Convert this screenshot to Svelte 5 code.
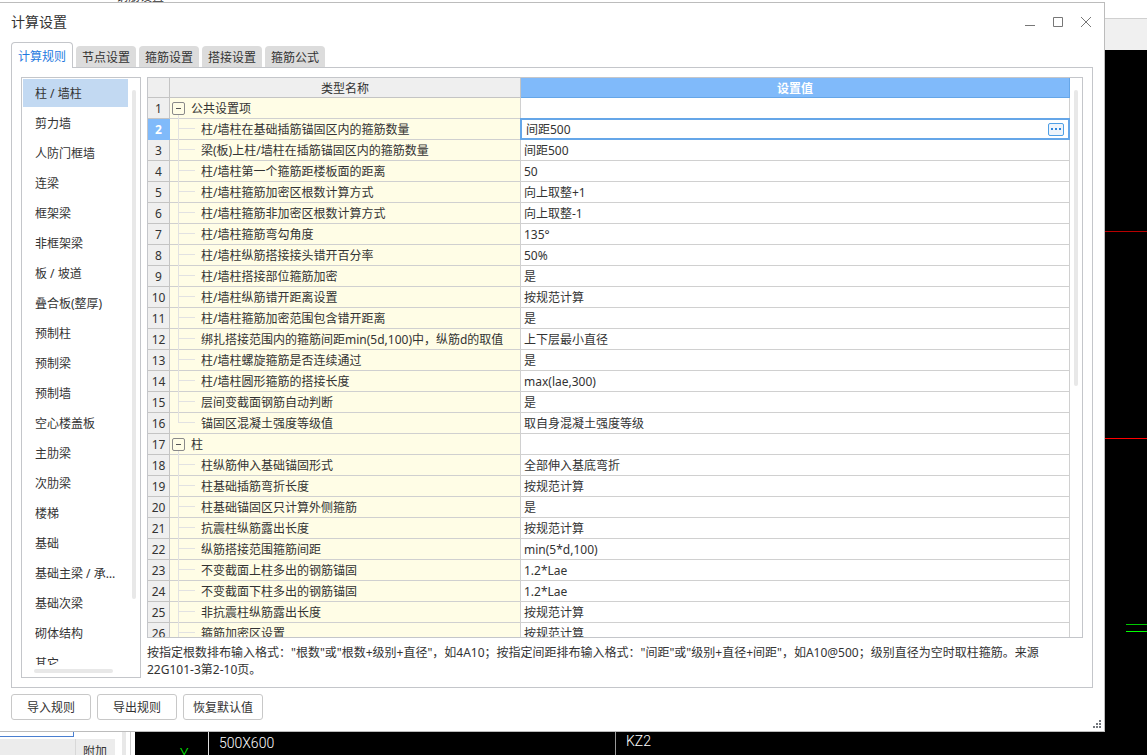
<script>
  const tabs = ['计算规则', '节点设置', '箍筋设置', '搭接设置', '箍筋公式'];
  const members = [
    '柱 / 墙柱', '剪力墙', '人防门框墙', '连梁', '框架梁', '非框架梁', '板 / 坡道',
    '叠合板(整厚)', '预制柱', '预制梁', '预制墙', '空心楼盖板', '主肋梁', '次肋梁',
    '楼梯', '基础', '基础主梁 / 承台梁', '基础次梁', '砌体结构', '其它'
  ];
  const source = [
    ['公共设置项', null],
    ['柱/墙柱在基础插筋锚固区内的箍筋数量', '间距500'],
    ['梁(板)上柱/墙柱在插筋锚固区内的箍筋数量', '间距500'],
    ['柱/墙柱第一个箍筋距楼板面的距离', '50'],
    ['柱/墙柱箍筋加密区根数计算方式', '向上取整+1'],
    ['柱/墙柱箍筋非加密区根数计算方式', '向上取整-1'],
    ['柱/墙柱箍筋弯勾角度', '135°'],
    ['柱/墙柱纵筋搭接接头错开百分率', '50%'],
    ['柱/墙柱搭接部位箍筋加密', '是'],
    ['柱/墙柱纵筋错开距离设置', '按规范计算'],
    ['柱/墙柱箍筋加密范围包含错开距离', '是'],
    ['绑扎搭接范围内的箍筋间距min(5d,100)中，纵筋d的取值', '上下层最小直径'],
    ['柱/墙柱螺旋箍筋是否连续通过', '是'],
    ['柱/墙柱圆形箍筋的搭接长度', 'max(lae,300)'],
    ['层间变截面钢筋自动判断', '是'],
    ['锚固区混凝土强度等级值', '取自身混凝土强度等级'],
    ['柱', null],
    ['柱纵筋伸入基础锚固形式', '全部伸入基底弯折'],
    ['柱基础插筋弯折长度', '按规范计算'],
    ['柱基础锚固区只计算外侧箍筋', '是'],
    ['抗震柱纵筋露出长度', '按规范计算'],
    ['纵筋搭接范围箍筋间距', 'min(5*d,100)'],
    ['不变截面上柱多出的钢筋锚固', '1.2*Lae'],
    ['不变截面下柱多出的钢筋锚固', '1.2*Lae'],
    ['非抗震柱纵筋露出长度', '按规范计算'],
    ['箍筋加密区设置', '按规范计算']
  ];

  let activeTab = $state(0);
  let activeMember = $state(0);
  let selected = $state(1);
  let rows = $state(
    source.map(([name, value], i) => ({
      name,
      value,
      group: value === null,
      last: i + 1 < source.length && source[i + 1][1] === null
    }))
  );
</script>

<div class="desktop">
  <div class="canvas" aria-hidden="true">
    <div class="app-top"><span class="app-title">钢筋设置</span></div>
    <div class="app-bar"></div>
    <div class="axis dim"></div>
    <div class="axis red"></div>
    <div class="axis green upper"></div>
    <div class="axis green lower"></div>
    <div class="dock">
      <div class="dock-field"></div>
      <div class="dock-head"><span>附加</span></div>
      <div class="dock-bar"></div>
      <div class="dock-edge"></div>
    </div>
    <span class="cad mark">Y</span>
    <div class="cad-line first"></div>
    <span class="cad size">500X600</span>
    <div class="cad-line second"></div>
    <span class="cad tag">KZ2</span>
  </div>

  <main class="dialog">
    <header>
      <h1>计算设置</h1>
      <div class="window-buttons">
        <button aria-label="最小化"><svg viewBox="0 0 12 12"><path d="M1 9.5h10" /></svg></button>
        <button aria-label="最大化"><svg viewBox="0 0 12 12"><path d="M1.500 1.500h9v9h-9z" /></svg></button>
        <button aria-label="关闭"><svg viewBox="0 0 12 12"><path d="M1 1l10 10M11 1L1 11" /></svg></button>
      </div>
    </header>

    <div class="tabs" role="tablist">
      {#each tabs as tab, i}
        <button role="tab" aria-selected={activeTab === i} class:active={activeTab === i} onclick={() => (activeTab = i)}>{tab}</button>
      {/each}
    </div>

    <section class="panel">
      <nav class="members">
        <ul>
          {#each members as member, i}
            <li><button class:active={activeMember === i} onclick={() => (activeMember = i)}><span>{member}</span></button></li>
          {/each}
        </ul>
        <div class="thumb side"></div>
        <div class="thumb bottom"></div>
      </nav>

      <div class="content">
        <div class="grid">
          <table>
            <colgroup><col class="c-num" /><col class="c-name" /><col /></colgroup>
            <thead>
              <tr><th></th><th>类型名称</th><th class="picked">设置值</th></tr>
            </thead>
            <tbody>
              {#each rows as row, i}
                <tr class:selected={selected === i} onclick={() => (selected = i)}>
                  <th scope="row">{i + 1}</th>
                  <td class="name" class:group={row.group} class:last={row.last}>
                    <div>
                      {#if row.group}
                        <button class="toggle" aria-label="折叠{row.name}"></button>
                      {:else}
                        <i class="branch"></i>
                      {/if}
                      <span>{row.name}</span>
                    </div>
                  </td>
                  <td class="value">
                    {#if selected === i && !row.group}
                      <div class="editor">
                        <input aria-label={row.name} bind:value={row.value} />
                        <button aria-label="更多"><i></i><i></i><i></i></button>
                      </div>
                    {:else}
                      {row.value ?? ''}
                    {/if}
                  </td>
                </tr>
              {/each}
            </tbody>
          </table>
          <div class="thumb side"></div>
        </div>
        <p>按指定根数排布输入格式："根数"或"根数+级别+直径"，如4A10；按指定间距排布输入格式："间距"或"级别+直径+间距"，如A10@500；级别直径为空时取柱箍筋。来源22G101-3第2-10页。</p>
      </div>
    </section>

    <footer>
      <button>导入规则</button>
      <button>导出规则</button>
      <button>恢复默认值</button>
      <svg class="grip" viewBox="0 0 8 8"><path d="M6 0h2v2H6zM3 3h2v2H3zM6 3h2v2H6zM0 6h2v2H0zM3 6h2v2H3zM6 6h2v2H6z" /></svg>
    </footer>
  </main>
</div>

<style>
  :global(body) { margin: 0; }
  .desktop, .desktop * { box-sizing: border-box; }
  .desktop {
    position: relative;
    height: 100vh;
    overflow: hidden;
    background: #000;
    color: #333;
    font: 12px/20px "Noto Sans", "Noto Sans CJK SC", sans-serif;
  }
  button, input { font: inherit; color: inherit; margin: 0; padding: 0; }

  /* drawing canvas behind the window */
  .canvas > * { position: absolute; }
  .app-top { top: 0; left: 0; right: 0; height: 19px; background: #fff; border-bottom: 1px solid #d0d0d0; }
  .app-title { position: absolute; left: 116px; top: -12px; line-height: 18px; }
  .app-bar { top: 19px; left: 0; right: 0; height: 31px; background: #f0f0f0; }
  .axis { right: 0; width: 43px; height: 1px; }
  .axis.dim { top: 231px; background: #b80000; }
  .axis.red { top: 438px; background: #f00; }
  .axis.green { width: 21px; background: #00c800; }
  .axis.upper { top: 624px; }
  .axis.lower { top: 631px; background: #0f0; }
  .dock { left: 0; bottom: 0; width: 135px; height: 25px; padding-top: 2px; background: #fff; display: grid; grid-template-columns: 115px 7px 4px 4px 1px; grid-template-rows: 5px 1fr; }
  .dock-field { width: 74px; border: solid #4a7fd0; border-width: 0 1px 1px 0; }
  .dock-head { grid-row: 2; margin-top: 2px; padding-left: 75px; background: #ececec; overflow: hidden; }
  .dock-head span { display: block; padding-left: 7px; border-left: 1px solid #d8d8d8; line-height: 25px; }
  .dock-bar { grid-area: 1 / 3 / 3 / 4; background: #e8e8e8; }
  .dock-edge { grid-area: 1 / 5 / 3 / 6; background: #ccc; }
  .cad { color: #fff; font: 300 14px/20px Roboto, "Liberation Sans", sans-serif; }
  .cad.size { left: 219px; bottom: 2px; }
  .cad.tag { left: 626px; bottom: 4px; }
  .cad.mark { left: 180px; bottom: -9px; color: #0f0; }
  .cad-line { bottom: 0; width: 1px; height: 23px; background: #ddd; }
  .cad-line.first { left: 208px; }
  .cad-line.second { left: 615px; background: #999; }

  .dialog {
    position: absolute;
    inset: 2px 42px 23px -1px;
    display: flex;
    flex-direction: column;
    padding: 0 11px;
    background: #fff;
    border: 1px solid #bcbcbc;
  }
  header { display: flex; justify-content: space-between; align-items: center; height: 39px; padding: 0 1px 2px 0; }
  h1 { margin: 0; font-size: 14px; font-weight: 400; }
  .window-buttons { display: flex; gap: 16px; }
  .window-buttons button { width: 12px; height: 12px; border: 0; background: none; }
  .window-buttons svg { display: block; fill: none; stroke: #777; }

  .tabs { display: flex; align-items: flex-end; gap: 3px; height: 26px; margin-bottom: -1px; z-index: 1; }
  .tabs button { width: 60px; height: 21px; padding-top: 2px; line-height: 19px; border: 0; border-radius: 4px 4px 0 0; background: #dcdcdc; margin-bottom: 1px; }
  .tabs button.active { width: 62px; height: 26px; margin: 0; border: 1px solid #c4c6ca; border-bottom: 0; background: #fff; color: #1f7ae0; }

  .panel { flex: 1; min-height: 0; display: flex; gap: 6px; padding: 9px; border: 1px solid #c4c6ca; }
  .members { position: relative; flex: none; width: 120px; border: 1px solid #c4c6ca; padding: 1px 12px 12px 1px; }
  .members ul { list-style: none; height: 100%; margin: 0; padding: 0; overflow: hidden; }
  .members li { height: 30px; }
  .members button { display: block; width: 105px; height: 28px; padding: 2px 9px 0 12px; border: 0; background: none; text-align: left; }
  .members button span { display: block; overflow: hidden; text-overflow: ellipsis; white-space: nowrap; }
  .members button.active { background: #c2d9f2; }
  .thumb { position: absolute; border-radius: 2px; background: #e8e8e8; }
  .members .side { top: 12px; right: 4px; bottom: 78px; width: 4px; }
  .members .bottom { left: 12px; right: 27px; bottom: 4px; height: 4px; }

  .content { flex: 1; min-width: 0; display: flex; flex-direction: column; }
  .grid { position: relative; flex: 1; min-height: 0; overflow: hidden; border: 1px solid #c4c6ca; padding-right: 12px; }
  .grid .side { top: 12px; right: 4px; width: 4px; height: 53%; }
  table { width: 100%; table-layout: fixed; border-spacing: 0; line-height: 18px; }
  .c-num { width: 22px; }
  .c-name { width: 351px; }
  th, td { height: 21px; padding: 2px 0 0; border: solid #d0d0d0; border-width: 0 1px 1px 0; font-weight: 400; white-space: nowrap; }
  th { background: #efefef; border-color: #c4c4c4; }
  thead th { height: 20px; line-height: 17px; }
  thead .picked { background: #80bafa; border-color: #65a6e8; color: #fff; font-weight: 700; }
  .selected th { background: #80bafa; border-color: #80bafa; color: #fff; font-weight: 700; }
  .name { padding: 0; background: #fffde6; }
  .name div { position: relative; height: 20px; padding: 2px 0 0 31px; }
  .name.group div { padding-left: 21px; }
  .name div::before { content: ""; position: absolute; left: 8px; top: 0; bottom: -1px; width: 1px; background: #e2e2e2; }
  .name.group div::before { top: 17px; }
  .name.last div::before { bottom: 10px; }
  .branch { position: absolute; left: 9px; top: 9px; width: 16px; height: 1px; background: #e2e2e2; }
  .toggle { position: absolute; left: 2px; top: 4px; width: 13px; height: 13px; border: 1px solid #8a8a8a; border-radius: 2px; background: #fffde6; }
  .toggle::before { content: ""; position: absolute; left: 3px; top: 5px; width: 5px; height: 1px; background: #555; }
  .value { padding-left: 3px; }
  .value:has(.editor) { padding: 0; }
  .editor { display: flex; align-items: center; height: 22px; margin: -1px; border: 2px solid #65a6e8; padding: 0 4px; background: #fff; }
  .editor input { flex: 1; min-width: 0; height: 18px; padding-top: 2px; border: 0; outline: 0; background: none; }
  .editor button { display: flex; align-items: center; justify-content: center; gap: 2px; width: 16px; height: 13px; border: 1px solid #4f9fe6; border-radius: 2px; background: #eef4fb; }
  .editor button i { width: 2px; height: 2px; background: #2f86dc; }
  p { margin: 0; padding-top: 6px; line-height: 17px; }

  footer { position: relative; display: flex; gap: 6px; padding: 6px 0 11px; }
  footer button { width: 80px; height: 26px; padding-top: 2px; border: 1px solid #c8c8c8; border-radius: 3px; background: #fff; }
  .grip { position: absolute; right: -8px; bottom: 3px; width: 8px; height: 8px; fill: #73777d; }
</style>
